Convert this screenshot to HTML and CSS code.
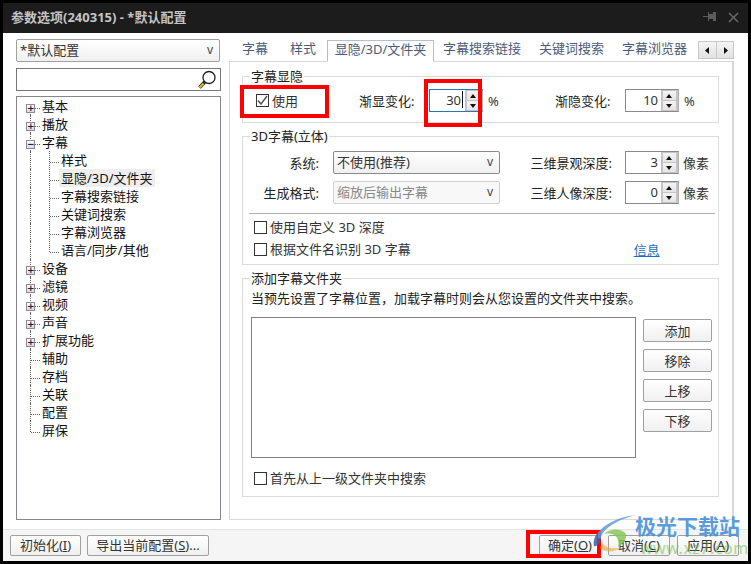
FILE: index.html
```html
<!DOCTYPE html>
<html lang="zh">
<head>
    <meta charset="UTF-8">
    <title>参数选项</title>
    <link rel="stylesheet" href="styles.css">
</head>
<body>
    <div class="window">
        <div class="titlebar">
            <span class="title">参数选项(240315) - *默认配置</span>
            <span class="title-btns">
                <svg width="14" height="12" viewBox="0 0 14 12"><path d="M0 5h5V1h1v2h4V1h3v9h-3V8H6v2H5V6H0z" fill="#5c5c5c"/></svg>
                <svg width="11" height="11" viewBox="0 0 11 11"><path d="M1 1l9 9M10 1l-9 9" stroke="#666" stroke-width="1.6" fill="none"/></svg>
            </span>
        </div>

        <div class="main">
            <div class="sidebar">
                <div class="combo side-combo"><span>*默认配置</span><i class="caret">v</i></div>
                <div class="search">
                    <svg width="22" height="22" viewBox="0 0 22 22"><circle cx="13" cy="8.5" r="6" fill="#fff" stroke="#222" stroke-width="1.3"/><path d="M8.700 13L3.500 18.500" stroke="#222" stroke-width="3.400"/><path d="M7.500 14.500L3.500 18.500" stroke="#e8c020" stroke-width="2"/></svg>
                </div>
                <ul class="tree">
                    <li class="node"><b class="exp">+</b>基本</li>
                    <li class="node"><b class="exp">+</b>播放</li>
                    <li class="node"><b class="exp">−</b>字幕</li>
                    <li class="leaf">样式</li>
                    <li class="leaf"><span class="picked">显隐/3D/文件夹</span></li>
                    <li class="leaf">字幕搜索链接</li>
                    <li class="leaf">关键词搜索</li>
                    <li class="leaf">字幕浏览器</li>
                    <li class="leaf last">语言/同步/其他</li>
                    <li class="node"><b class="exp">+</b>设备</li>
                    <li class="node"><b class="exp">+</b>滤镜</li>
                    <li class="node"><b class="exp">+</b>视频</li>
                    <li class="node"><b class="exp">+</b>声音</li>
                    <li class="node"><b class="exp">+</b>扩展功能</li>
                    <li class="node">辅助</li>
                    <li class="node">存档</li>
                    <li class="node">关联</li>
                    <li class="node">配置</li>
                    <li class="node end">屏保</li>
                </ul>
            </div>

            <div class="content">
                <div class="tabs">
                    <span class="tab">字幕</span>
                    <span class="tab tab-second">样式</span>
                    <span class="tab active">显隐/3D/文件夹</span>
                    <span class="tab">字幕搜索链接</span>
                    <span class="tab">关键词搜索</span>
                    <span class="tab">字幕浏览器</span>
                    <span class="tab-arrows">
                        <i><svg width="5" height="7" viewBox="0 0 5 7"><path d="M4 0v7L0 3.500z" fill="#111"/></svg></i>
                        <i><svg width="5" height="7" viewBox="0 0 5 7"><path d="M1 0v7l4-3.500z" fill="#111"/></svg></i>
                    </span>
                </div>

                <div class="panel">
                    <div class="group group-fade">
                        <span class="legend">字幕显隐</span>
                        <label class="check use-check"><i class="box ticked"><svg width="11" height="11" viewBox="0 0 11 11"><path d="M1 5.500l3 3.500 6-8" stroke="#555" stroke-width="1.500" fill="none"/></svg></i>使用</label>
                        <span class="lbl fade-lbl">渐显变化:</span>
                        <span class="spin focus"><em>30</em><s></s><i class="updown"></i></span>
                        <span class="unit pct">%</span>
                        <span class="lbl fade-lbl">渐隐变化:</span>
                        <span class="spin"><em>10</em><i class="updown"></i></span>
                        <span class="unit pct">%</span>
                    </div>

                    <div class="group group-3d">
                        <span class="legend">3D字幕(立体)</span>
                        <div class="row3d">
                            <span class="lbl lbl-left">系统:</span>
                            <div class="combo"><span>不使用(推荐)</span><i class="caret">v</i></div>
                            <span class="lbl lbl-right">三维景观深度:</span>
                            <span class="spin"><em>3</em><i class="updown"></i></span>
                            <span class="unit">像素</span>
                        </div>
                        <div class="row3d">
                            <span class="lbl lbl-left">生成格式:</span>
                            <div class="combo off"><span>缩放后输出字幕</span><i class="caret">v</i></div>
                            <span class="lbl lbl-right">三维人像深度:</span>
                            <span class="spin"><em>0</em><i class="updown"></i></span>
                            <span class="unit">像素</span>
                        </div>
                        <hr class="sep">
                        <label class="check"><i class="box"></i>使用自定义 3D 深度</label>
                        <div class="check-row">
                            <label class="check"><i class="box"></i>根据文件名识别 3D 字幕</label>
                            <a class="info">信息</a>
                        </div>
                    </div>

                    <div class="group group-dirs">
                        <span class="legend">添加字幕文件夹</span>
                        <p class="hint">当预先设置了字幕位置&#65292;加载字幕时则会从您设置的文件夹中搜索。</p>
                        <div class="dirs">
                            <div class="listbox"></div>
                            <div class="dir-btns">
                                <button class="btn">添加</button>
                                <button class="btn">移除</button>
                                <button class="btn">上移</button>
                                <button class="btn">下移</button>
                            </div>
                        </div>
                        <label class="check parent-check"><i class="box"></i>首先从上一级文件夹中搜索</label>
                    </div>
                </div>
            </div>
        </div>

        <div class="footer">
            <button class="btn foot-a">初始化(<u>I</u>)</button>
            <button class="btn foot-b">导出当前配置(<u>S</u>)...</button>
            <span class="gap"></span>
            <button class="btn foot-c">确定(<u>O</u>)</button>
            <button class="btn foot-c">取消(<u>C</u>)</button>
            <button class="btn foot-c">应用(<u>A</u>)</button>
        </div>
    </div>

    <!-- annotations on top of the screenshot -->
    <div class="mark mark-use"></div>
    <div class="mark mark-spin"></div>
    <div class="mark mark-ok"></div>

    <div class="watermark">
        <svg class="wm-logo" width="66" height="50" viewBox="0 0 66 50">
            <path d="M4 34C2 20 20 6 46 3C30 7 14 15 11 25C10 30 7 35 4 34z" fill="#5b9bd5"/>
            <path d="M4 34C3 29 5 24 8 20C7 25 8 29 11 25C10 30 7 35 4 34z" fill="#3a62a8"/>
            <path d="M14 22C20 16 32 16 36 22C37 27 33 32 28 35C30 28 26 23 22 22C19 21 16 21 14 22z" fill="#86c85a"/>
            <path d="M10 36C14 40 24 41 30 36C24 37 16 36 12 31z" fill="#e8a23a" opacity=".7"/>
        </svg>
        <span class="wm-name">极光下载站</span>
        <span class="wm-url">www.xz7.com</span>
    </div>
</body>
</html>
```
FILE: styles.css
```css
* {
    box-sizing: border-box;
}

html, body {
    margin: 0;
    padding: 0;
    height: 100%;
    overflow: hidden;
    background-color: #000;
}

body {
    font-family: "Noto Sans", "Noto Sans CJK SC", sans-serif;
    font-size: 13px;
    line-height: 18px;
    color: #222;
    position: relative;
}

.window {
    margin: 0 3px;
    padding-top: 3px;
    height: 561px;
    display: flex;
    flex-direction: column;
    background-color: #fff;
    background-clip: content-box;
}

.titlebar {
    height: 30px;
    flex: none;
    background-color: #1c1c1c;
    color: #c4c4c4;
    display: flex;
    align-items: center;
    justify-content: space-between;
    padding: 0 9px 2px 8px;
    font-size: 13px;
    font-weight: 700;
}

.title-btns {
    display: flex;
    align-items: center;
    gap: 11px;
}

.main {
    flex: 1;
    display: flex;
    min-height: 0;
}

/* left column */
.sidebar {
    width: 226px;
    flex: none;
    padding: 6px 5px 0 13px;
    display: flex;
    flex-direction: column;
}

.combo {
    height: 23px;
    border: 1px solid #8a8a8a;
    border-radius: 2px;
    background: linear-gradient(#fff, #f0f0f0);
    display: flex;
    align-items: center;
    justify-content: space-between;
    padding: 0 6px 2px 3px;
    color: #333;
}

.combo.off {
    border-color: #d0d0d0;
    color: #888;
    background: #f8f8f8;
}

.side-combo {
    width: 204px;
    border-color: #a0a0a0;
}

.caret {
    font-style: normal;
    font-size: 12px;
    color: #444;
}

.search {
    margin-top: 6px;
    height: 23px;
    width: 205px;
    border: 1px solid #777;
    display: flex;
    justify-content: flex-end;
    align-items: center;
    padding-right: 2px;
}

.tree {
    list-style: none;
    margin: 5px 0 0;
    padding: 0;
    width: 205px;
    height: 424px;
    border: 1px solid #86868c;
    color: #111;
}

.node, .leaf {
    height: 18px;
    position: relative;
    padding-left: 25px;
    white-space: nowrap;
}

.leaf {
    padding-left: 44px;
    /* second-level vertical guide */
    background-image: repeating-linear-gradient(#666 0 1px, transparent 1px 2px);
    background-size: 1px 100%;
    background-position: 32px 0;
    background-repeat: no-repeat;
}

.leaf.last {
    background-size: 1px 11px;
}

.node::before, .leaf::before {
    content: "";
    position: absolute;
    left: 13px;
    top: 0;
    height: 18px;
    border-left: 1px dotted #666;
}

.node:first-child::before {
    top: 12px;
    height: 6px;
}

.node.end::before {
    height: 11px;
}

.node::after, .leaf::after {
    content: "";
    position: absolute;
    left: 14px;
    top: 11px;
    width: 9px;
    border-top: 1px dotted #666;
}

.leaf::after {
    left: 33px;
}

.exp {
    position: absolute;
    left: 9px;
    top: 7px;
    z-index: 1;
    width: 9px;
    height: 9px;
    border: 1px solid #8a8a9a;
    background: linear-gradient(#fff, #d8d8e4);
    font-weight: 700;
    font-size: 9px;
    line-height: 7px;
    text-align: center;
    color: #223;
    font-family: "DejaVu Sans", sans-serif;
}

.picked {
    background-color: #eee;
    display: inline-block;
    padding: 0 2px;
    margin-left: -2px;
}

/* right column */
.content {
    flex: 1;
    display: flex;
    flex-direction: column;
    min-width: 0;
}

.tabs {
    height: 28px;
    padding: 7px 0 0 4px;
    display: flex;
    position: relative;
}

.tab {
    height: 21px;
    padding: 0 9px;
    line-height: 17px;
    color: #4a5a78;
    white-space: nowrap;
}

.tab-second {
    margin-left: 4px;
}

.tab.active {
    width: 107px;
    margin-left: 2px;
    padding: 0;
    text-align: center;
    border: 1px solid #b4bed0;
    border-bottom: 1px solid #fff;
    background-color: #fff;
    height: 22px;
    position: relative;
    z-index: 1;
}

.tab-arrows {
    display: flex;
    position: absolute;
    left: 469px;
    top: 8px;
    border: 1px solid #c8c8c8;
    height: 18px;
}

.tab-arrows i {
    width: 17px;
    background: linear-gradient(#f4f4f4, #e2e2e2);
    display: flex;
    align-items: center;
    justify-content: center;
}

.tab-arrows i + i {
    border-left: 1px solid #c8c8c8;
}

.panel {
    width: 505px;
    height: 459px;
    border: 1px solid #d8d8d8;
    border-right-width: 2px;
    padding: 14px 12px 0;
}

.group {
    width: 477px;
    border: 1px solid #dcdcdc;
    position: relative;
    margin-bottom: 13px;
}

.legend {
    position: absolute;
    left: 7px;
    top: -10px;
    padding: 0 1px;
    background-color: #fff;
    color: #222;
}

.group-fade {
    height: 47px;
    display: flex;
    align-items: center;
    padding: 2px 0 0 13px;
}

.check {
    display: flex;
    align-items: center;
    height: 18px;
    color: #333;
    white-space: nowrap;
}

.box {
    width: 13px;
    height: 13px;
    border: 1px solid #333;
    margin-right: 3px;
    display: flex;
    align-items: center;
    justify-content: center;
    flex: none;
}

.use-check {
    width: 103px;
    flex: none;
}

.lbl {
    color: #222;
    white-space: nowrap;
}

.fade-lbl {
    width: 70px;
    flex: none;
}

.spin {
    width: 54px;
    height: 23px;
    border: 1px solid #8a8a8a;
    border-right-color: #b0b0b0;
    display: flex;
    flex: none;
    position: relative;
}

.spin em {
    font-style: normal;
    flex: 1;
    text-align: right;
    padding-right: 3px;
    color: #333;
    line-height: 20px;
}

.spin.focus {
    border-color: #2b74b8;
    border-right-color: #b0b0b0;
}

.spin.focus em {
    padding-right: 4px;
}

.spin s {
    position: absolute;
    left: 32px;
    top: 1px;
    height: 17px;
    border-left: 1px solid #111;
}

.updown {
    width: 17px;
    flex: none;
    background-color: #c4c4c4;
    background-image:
        linear-gradient(#f4f4f4, #e4e4e4),
        linear-gradient(#f4f4f4, #e4e4e4);
    background-size: 13px 9px;
    background-repeat: no-repeat;
    background-position: 2px 1px, 2px 11px;
    position: relative;
}

.updown::before {
    content: "";
    position: absolute;
    left: 5px;
    top: 4px;
    border: 3.5px solid transparent;
    border-top: 0;
    border-bottom: 4px solid #111;
}

.updown::after {
    content: "";
    position: absolute;
    left: 5px;
    top: 14px;
    border: 3.5px solid transparent;
    border-bottom: 0;
    border-top: 4px solid #111;
}

.unit {
    margin-left: 4px;
    white-space: nowrap;
    color: #333;
}

.pct {
    margin-left: 5px;
    width: 67px;
    flex: none;
}

.group-3d {
    height: 129px;
    padding: 14px 4px 0 6px;
}

.row3d {
    display: grid;
    grid-template-columns: 70px 181px 125px 54px auto;
    align-items: center;
    height: 23px;
    margin-bottom: 7px;
}

.lbl-left {
    text-align: right;
}

.row3d .combo {
    margin-left: 14px;
    width: 167px;
}

.lbl-right {
    text-align: right;
    padding-right: 13px;
}

.sep {
    border: 0;
    border-top: 1px solid #b0b0b0;
    margin: 9px 0 4px 0;
    width: 466px;
}

.group-3d .check {
    margin-left: 5px;
    margin-bottom: 4px;
}

.check-row {
    display: flex;
    align-items: flex-start;
}

.info {
    color: #1a6fc0;
    text-decoration: underline;
    margin: 1px 0 0 223px;
}

.group-dirs {
    height: 219px;
    padding: 10px 6px 0 8px;
}

.hint {
    margin: 0;
    color: #222;
    white-space: nowrap;
}

.dirs {
    display: flex;
    gap: 7px;
    margin-top: 10px;
}

.listbox {
    width: 385px;
    height: 141px;
    border: 1px solid #808086;
}

.dir-btns {
    display: flex;
    flex-direction: column;
    gap: 7px;
    padding-top: 2px;
}

.btn {
    font: inherit;
    color: #333;
    width: 69px;
    height: 23px;
    padding: 0;
    border: 1px solid #a0a0a0;
    border-radius: 2px;
    background: linear-gradient(#fff, #f0f0f0);
}

.parent-check {
    margin: 11px 0 0 3px;
}

/* footer */
.footer {
    flex: none;
    height: 32px;
    background-color: #f5f5f5;
    border-top: 1px solid #e4e4e4;
    display: flex;
    align-items: center;
    padding: 0 9px 0 7px;
    gap: 6px;
}

.gap {
    flex: 1;
}

.foot-a {
    width: 71px;
    height: 21px;
    line-height: 17px;
}

.foot-b {
    width: 122px;
    height: 21px;
    line-height: 17px;
}

.foot-c {
    width: 62px;
    height: 21px;
    line-height: 17px;
    margin-left: 1px;
}

/* red highlight boxes */
.mark {
    position: absolute;
    border: 4px solid #f00;
    z-index: 5;
}

.mark-use {
    left: 240px;
    top: 85px;
    width: 89px;
    height: 33px;
}

.mark-spin {
    left: 424px;
    top: 79px;
    width: 58px;
    height: 48px;
}

.mark-ok {
    left: 526px;
    top: 530px;
    width: 75px;
    height: 28px;
}

/* site watermark */
.watermark {
    position: absolute;
    left: 590px;
    top: 510px;
    width: 160px;
    height: 50px;
    z-index: 6;
    pointer-events: none;
}

.wm-logo {
    position: absolute;
    left: 0;
    top: 2px;
    opacity: .85;
}

.wm-name {
    position: absolute;
    left: 45px;
    top: 3px;
    font-size: 21px;
    line-height: 26px;
    font-weight: 700;
    color: #4a93d6;
    white-space: nowrap;
    opacity: .9;
}

.wm-url {
    position: absolute;
    left: 50px;
    top: 29px;
    font-size: 16px;
    line-height: 18px;
    letter-spacing: .5px;
    color: #6cc040;
    white-space: nowrap;
    opacity: .55;
}
```
